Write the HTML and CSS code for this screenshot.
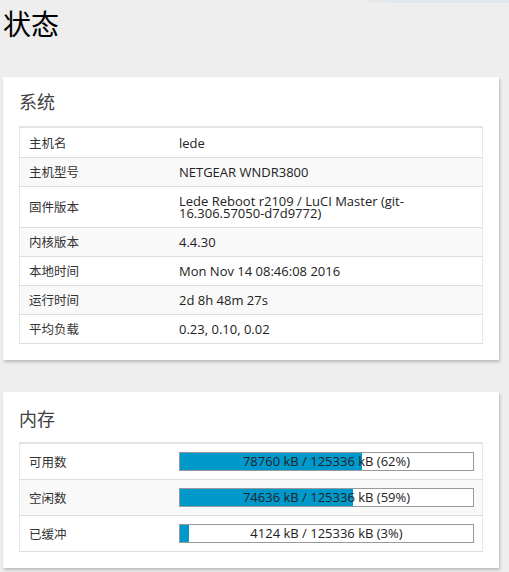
FILE: index.html
```html
<!DOCTYPE html>
<html lang="zh-CN">
<head>
<meta charset="utf-8">
<title>状态</title>
<link rel="stylesheet" href="styles.css">
</head>
<body>
<div class="topstrip"><span class="topstrip-left"></span></div>
<h2 class="page-title">状态</h2>

<section class="card">
  <h3 class="card-title">系统</h3>
  <table class="info">
    <tr><td class="lbl">主机名</td><td class="val">lede</td></tr>
    <tr class="alt"><td class="lbl">主机型号</td><td class="val">NETGEAR WNDR3800</td></tr>
    <tr><td class="lbl">固件版本</td><td class="val">Lede Reboot r2109 / LuCI Master (git-16.306.57050-d7d9772)</td></tr>
    <tr class="alt"><td class="lbl">内核版本</td><td class="val">4.4.30</td></tr>
    <tr><td class="lbl">本地时间</td><td class="val">Mon Nov 14 08:46:08 2016</td></tr>
    <tr class="alt"><td class="lbl">运行时间</td><td class="val">2d 8h 48m 27s</td></tr>
    <tr><td class="lbl">平均负载</td><td class="val">0.23, 0.10, 0.02</td></tr>
  </table>
</section>

<section class="card card-mem">
  <h3 class="card-title">内存</h3>
  <table class="info mem">
    <tr><td class="lbl">可用数</td><td class="val"><div class="bar"><div class="fill" style="width:62%"></div><span class="bar-text">78760 kB / 125336 kB (62%)</span></div></td></tr>
    <tr class="alt"><td class="lbl">空闲数</td><td class="val"><div class="bar"><div class="fill" style="width:59%"></div><span class="bar-text">74636 kB / 125336 kB (59%)</span></div></td></tr>
    <tr><td class="lbl">已缓冲</td><td class="val"><div class="bar"><div class="fill" style="width:3%"></div><span class="bar-text">4124 kB / 125336 kB (3%)</span></div></td></tr>
  </table>
</section>
</body>
</html>
```

FILE: styles.css
```css
html, body {
  margin: 0;
  padding: 0;
  background: #eeeeee;
}
body {
  padding: 0 10px 0 3px;
  font-family: "Open Sans", "Noto Sans CJK SC", sans-serif;
  font-size: 13px;
  color: #222;
}
.topstrip {
  height: 3px;
  margin: 0 -10px 0 365px;
  background: #e1e7ed;
  display: flex;
}
.topstrip-left {
  width: 22px;
  background: #e6e9ec;
}
.page-title {
  margin: 2px 0 0 0;
  height: 72px;
  font-family: "Noto Sans CJK SC", sans-serif;
  font-weight: 400;
  font-size: 28px;
  line-height: 36px;
  color: #000;
}
.card {
  background: #fff;
  padding: 12px 16px 16px 16px;
  box-shadow: 1px 2px 3px rgba(0, 0, 0, 0.22);
  margin-bottom: 32px;
}
.card-title {
  margin: 0 0 13px 0;
  font-family: "Noto Sans CJK SC", sans-serif;
  font-weight: 400;
  font-size: 18px;
  line-height: 24px;
  color: #404040;
}
.card-mem .card-title {
  margin-top: 2px;
  margin-bottom: 12px;
}
.info {
  width: 100%;
  border-collapse: collapse;
  border: 1px solid #e8e8e8;
  border-top: 2px solid #e4e4e4;
}
.info td {
  padding: 8px 9px;
  line-height: 12px;
  height: 12px;
  vertical-align: middle;
  border-bottom: 1px solid #dddddd;
  color: #222;
}
.info td.lbl {
  width: 133px;
  font-family: "Noto Sans CJK SC", sans-serif;
  font-size: 12.5px;
  color: #333;
}
.info td.val {
  padding-left: 8px;
  padding-right: 8px;
}
.info tr.alt td {
  background: #f9f9f9;
}
.info tr:first-child td {
  padding-top: 9px;
}
.mem td {
  line-height: 19px;
  height: 19px;
}
.mem tr:first-child td {
  padding-top: 8px;
}
.bar {
  position: relative;
  height: 17px;
  border: 1px solid #999;
  background: #fff;
}
.fill {
  height: 100%;
  background: #0099cc;
}
.bar-text {
  position: absolute;
  left: 0;
  right: 0;
  top: 0;
  text-align: center;
  line-height: 17px;
  font-size: 13px;
  color: #222;
}
```
